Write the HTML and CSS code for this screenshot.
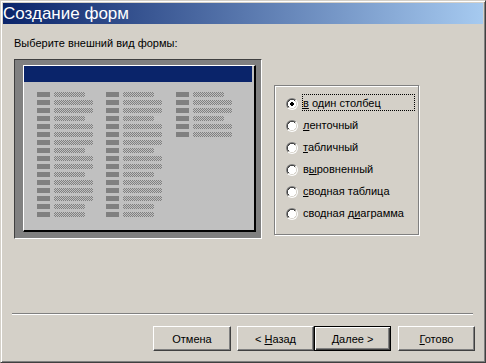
FILE: index.html
```html
<!DOCTYPE html>
<html lang="ru">
<head>
<meta charset="utf-8">
<title>Создание форм</title>
<link rel="stylesheet" href="styles.css">
</head>
<body>
<div class="window">
  <div class="titlebar">Создание форм</div>
  <div class="client">
    <div class="prompt">Выберите внешний вид формы:</div>
    <div class="main">
      <div class="preview">
        <div class="pv-form">
          <div class="pv-head"></div>
          <div class="pv-cols">
            <div class="pv-col">
              <div class="row"><span class="key"></span><span class="fld short"></span></div>
              <div class="row"><span class="key"></span><span class="fld"></span></div>
              <div class="row"><span class="key"></span><span class="fld"></span></div>
              <div class="row"><span class="key"></span><span class="fld short"></span></div>
              <div class="row"><span class="key"></span><span class="fld"></span></div>
              <div class="row"><span class="key"></span><span class="fld"></span></div>
              <div class="row"><span class="key"></span><span class="fld"></span></div>
              <div class="row"><span class="key"></span><span class="fld short"></span></div>
              <div class="row"><span class="key"></span><span class="fld"></span></div>
              <div class="row"><span class="key"></span><span class="fld"></span></div>
              <div class="row"><span class="key"></span><span class="fld short"></span></div>
              <div class="row"><span class="key"></span><span class="fld"></span></div>
              <div class="row"><span class="key"></span><span class="fld"></span></div>
              <div class="row"><span class="key"></span><span class="fld"></span></div>
              <div class="row"><span class="key"></span><span class="fld short"></span></div>
              <div class="row"><span class="key"></span><span class="fld short"></span></div>
            </div>
            <div class="pv-col">
              <div class="row"><span class="key"></span><span class="fld short"></span></div>
              <div class="row"><span class="key"></span><span class="fld"></span></div>
              <div class="row"><span class="key"></span><span class="fld"></span></div>
              <div class="row"><span class="key"></span><span class="fld short"></span></div>
              <div class="row"><span class="key"></span><span class="fld"></span></div>
              <div class="row"><span class="key"></span><span class="fld"></span></div>
              <div class="row"><span class="key"></span><span class="fld"></span></div>
              <div class="row"><span class="key"></span><span class="fld short"></span></div>
              <div class="row"><span class="key"></span><span class="fld"></span></div>
              <div class="row"><span class="key"></span><span class="fld"></span></div>
              <div class="row"><span class="key"></span><span class="fld short"></span></div>
              <div class="row"><span class="key"></span><span class="fld"></span></div>
              <div class="row"><span class="key"></span><span class="fld"></span></div>
              <div class="row"><span class="key"></span><span class="fld"></span></div>
              <div class="row"><span class="key"></span><span class="fld short"></span></div>
              <div class="row"><span class="key"></span><span class="fld short"></span></div>
            </div>
            <div class="pv-col">
              <div class="row"><span class="key"></span><span class="fld short"></span></div>
              <div class="row"><span class="key"></span><span class="fld"></span></div>
              <div class="row"><span class="key"></span><span class="fld"></span></div>
              <div class="row"><span class="key"></span><span class="fld short"></span></div>
              <div class="row"><span class="key"></span><span class="fld"></span></div>
              <div class="row"><span class="key"></span><span class="fld"></span></div>
            </div>
          </div>
        </div>
      </div>
      <div class="group">
        <div class="opt"><span class="radio checked"></span><span class="label focus"><u>в</u> один столбец</span></div>
        <div class="opt"><span class="radio"></span><span class="label"><u>л</u>енточный</span></div>
        <div class="opt"><span class="radio"></span><span class="label"><u>т</u>абличный</span></div>
        <div class="opt"><span class="radio"></span><span class="label">в<u>ы</u>ровненный</span></div>
        <div class="opt"><span class="radio"></span><span class="label"><u>с</u>водная таблица</span></div>
        <div class="opt"><span class="radio"></span><span class="label">сводная д<u>и</u>аграмма</span></div>
      </div>
    </div>
    <div class="sep"></div>
    <div class="buttons">
      <button class="btn btn-cancel">Отмена</button>
      <button class="btn btn-back">&lt; <u>Н</u>азад</button>
      <button class="btn btn-default"><u>Д</u>алее &gt;</button>
      <button class="btn btn-finish"><u>Г</u>отово</button>
    </div>
  </div>
</div>
</body>
</html>
```

FILE: styles.css
```css
* { box-sizing: border-box; }
html, body { margin: 0; padding: 0; }
body {
  width: 486px;
  height: 363px;
  overflow: hidden;
  background: #d4d0c8;
  font-family: "Liberation Sans", Arial, sans-serif;
  font-size: 11px;
  color: #000;
}
.window {
  width: 486px;
  height: 363px;
  border: 1px solid;
  border-color: #d4d0c8 #404040 #404040 #d4d0c8;
  box-shadow: inset 1px 1px #fff, inset -1px -1px #808080;
  padding: 2px;
  display: flex;
  flex-direction: column;
  background: #d4d0c8;
}
.titlebar {
  height: 21px;
  line-height: 21px;
  flex: none;
  background: linear-gradient(to right, #0a246a, #a6caf0);
  color: #fff;
  font-size: 17px;
  white-space: nowrap;
}
.client {
  flex: 1;
  padding: 13px 0 0 11px;
}
.prompt {
  height: 13px;
  line-height: 13px;
}
.main {
  display: flex;
  align-items: flex-start;
  margin-top: 9px;
  height: 180px;
}
.preview {
  flex: none;
  width: 248px;
  height: 180px;
  border: 1px solid;
  border-color: #404040 #fff #fff #404040;
  background: #808080;
  padding: 5px 5px 6px 8px;
}
.pv-form {
  width: 233px;
  height: 167px;
  border-style: solid;
  border-width: 1px 2px 2px 1px;
  border-color: #fff #000 #000 #fff;
  background: #c0c0c0;
}
.pv-head {
  height: 16px;
  margin-right: 2px;
  background: #0a246a;
}
.pv-cols {
  display: grid;
  grid-template-columns: 69px 70px 56px;
  align-items: start;
  padding: 10px 0 0 13px;
}
.pv-col {
  display: flex;
  flex-direction: column;
  gap: 3px;
}
.row {
  display: flex;
  height: 5px;
}
.key {
  width: 13px;
  margin-right: 4px;
  background: #808080;
}
.fld {
  width: 39px;
  background: repeating-conic-gradient(#808080 0 25%, #c0c0c0 0 50%) 0 0 / 2px 2px;
}
.fld.short { width: 31px; }

.group {
  flex: none;
  margin-left: 12px;
  margin-top: 26px;
  width: 145px;
  height: 150px;
  border: 1px solid #808080;
  box-shadow: inset 1px 1px #fff, 1px 1px #fff;
  padding: 6px 0 0 11px;
}
.opt {
  display: flex;
  align-items: flex-start;
  height: 22px;
}
.radio {
  flex: none;
  width: 12px;
  height: 12px;
  margin-top: 6px;
  margin-right: 4px;
  padding: 1px;
  border-radius: 50%;
  background: linear-gradient(135deg, #808080 50%, #fff 50%);
}
.radio::before {
  content: "";
  display: block;
  width: 10px;
  height: 10px;
  border-radius: 50%;
  background:
    radial-gradient(circle, #fff 0 4px, transparent 4px),
    linear-gradient(135deg, #404040 50%, #d4d0c8 50%);
}
.radio.checked::before {
  background:
    radial-gradient(circle, #000 0 2px, #fff 2px 4px, transparent 4px),
    linear-gradient(135deg, #404040 50%, #d4d0c8 50%);
}
.label {
  margin-top: 2px;
  width: 113px;
  height: 17px;
  border: 1px dotted transparent;
  padding-top: 1px;
  line-height: 14px;
  white-space: nowrap;
}
.label.focus { border-color: #000; }

.sep {
  margin-top: 74px;
  margin-left: -2px;
  width: 461px;
  height: 2px;
  border-top: 1px solid #808080;
  border-bottom: 1px solid #fff;
}
.buttons {
  display: flex;
  margin-top: 11px;
  padding-left: 139px;
}
.btn {
  flex: none;
  width: 77px;
  height: 25px;
  padding: 0;
  font: inherit;
  color: #000;
  background: #d4d0c8;
  border: 1px solid;
  border-color: #fff #404040 #404040 #fff;
  box-shadow: inset -1px -1px #808080;
  white-space: nowrap;
}
.btn-cancel { width: 78px; }
.btn-back { margin-left: 6px; }
.btn-default {
  border: 1px solid #000;
  box-shadow: inset 1px 1px #fff, inset -1px -1px #404040, inset -2px -2px #808080;
}
.btn-finish { margin-left: 7px; }
```
